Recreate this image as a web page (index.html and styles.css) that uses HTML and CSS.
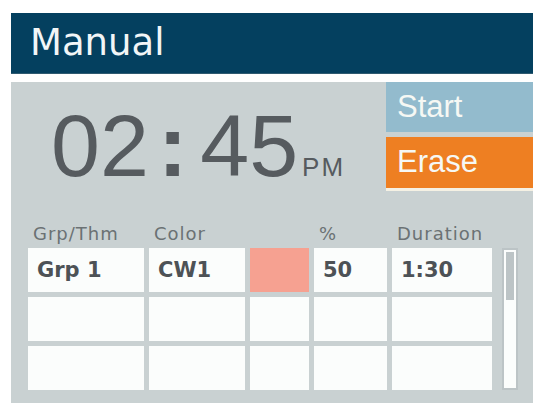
FILE: index.html
```html
<!DOCTYPE html>
<html>
<head>
<meta charset="utf-8">
<link rel="stylesheet" href="styles.css">
</head>
<body>
<div class="screen">
  <header class="title-bar">Manual</header>
  <main class="panel">
    <section class="top">
      <div class="clock">
        <span class="digits">02</span><span class="colon">:</span><span class="digits">45</span><span class="ampm">PM</span>
      </div>
      <div class="actions">
        <div class="btn btn-start">Start</div>
        <div class="btn btn-erase">Erase</div>
      </div>
    </section>
    <section class="table">
      <div class="label">Grp/Thm</div>
      <div class="label">Color</div>
      <div class="label"></div>
      <div class="label">%</div>
      <div class="label">Duration</div>
      <div class="label"></div>

      <div class="cell">Grp 1</div>
      <div class="cell">CW1</div>
      <div class="cell swatch"></div>
      <div class="cell">50</div>
      <div class="cell">1:30</div>
      <div class="scrollbar"><div class="thumb"></div></div>

      <div class="cell"></div>
      <div class="cell"></div>
      <div class="cell"></div>
      <div class="cell"></div>
      <div class="cell"></div>

      <div class="cell"></div>
      <div class="cell"></div>
      <div class="cell"></div>
      <div class="cell"></div>
      <div class="cell"></div>
    </section>
  </main>
</div>
</body>
</html>
```

FILE: styles.css
```css
* { box-sizing: border-box; }
html, body {
  margin: 0;
  padding: 0;
  background: #ffffff;
}
body {
  font-family: "DejaVu Sans", "Liberation Sans", sans-serif;
}
.screen {
  width: 522px;
  margin: 13px 0 0 11px;
}
.title-bar {
  height: 61px;
  background: #04405f;
  border-bottom: 1px solid #2f5a70;
  color: #f2f6f7;
  font-size: 37px;
  line-height: 60px;
  padding: 0 0 0 19px;
}
.panel {
  margin-top: 8px;
  background: #c9d1d2;
  padding: 0 15px 13px 17px;
}
.top {
  display: flex;
  height: 109px;
  margin-right: -15px;
  margin-left: -17px;
}
.clock {
  flex: 1;
  display: flex;
  align-items: baseline;
  padding: 21px 0 0 40px;
  color: #565b5f;
  font-family: "Liberation Sans", sans-serif;
}
.digits {
  font-size: 88px;
  line-height: 86px;
}
.colon {
  font-size: 88px;
  line-height: 86px;
  font-weight: bold;
  margin: 0 13px 0 9px;
}
.ampm {
  font-size: 26px;
  letter-spacing: 2px;
  margin-left: 4px;
}
.actions {
  width: 147px;
  display: flex;
  flex-direction: column;
  gap: 5px;
}
.btn {
  color: #f6f8f4;
  font-family: "Liberation Sans", sans-serif;
  font-size: 31px;
  padding-left: 11px;
  display: flex;
  align-items: center;
}
.btn-start {
  height: 50px;
  background: #93bbcd;
}
.btn-erase {
  height: 54px;
  background: #ee7f22;
  border-bottom: 3px solid #f5f1e4;
  padding-bottom: 2px;
}
.table {
  margin-top: 34px;
  display: grid;
  grid-template-columns: 116px 96px 59px 73px 100px 21px;
  grid-template-rows: 18px 44px 44px 44px;
  column-gap: 5px;
  row-gap: 5px;
}
.label {
  font-size: 18px;
  line-height: 18px;
  letter-spacing: 1px;
  color: #6b7174;
  padding-left: 5px;
  white-space: nowrap;
}
.cell {
  background: #fbfdfc;
  font-size: 21px;
  font-weight: bold;
  color: #4d5256;
  display: flex;
  align-items: center;
  padding-left: 9px;
}
.cell.swatch {
  background: #f6a191;
}
.scrollbar {
  grid-column: 6;
  grid-row: 2 / 5;
  justify-self: end;
  width: 16px;
  border: 2px solid #bcc4c6;
  background: #fbfdfc;
  padding: 2px;
}
.thumb {
  height: 48px;
  background: #bcc4c6;
}
```
